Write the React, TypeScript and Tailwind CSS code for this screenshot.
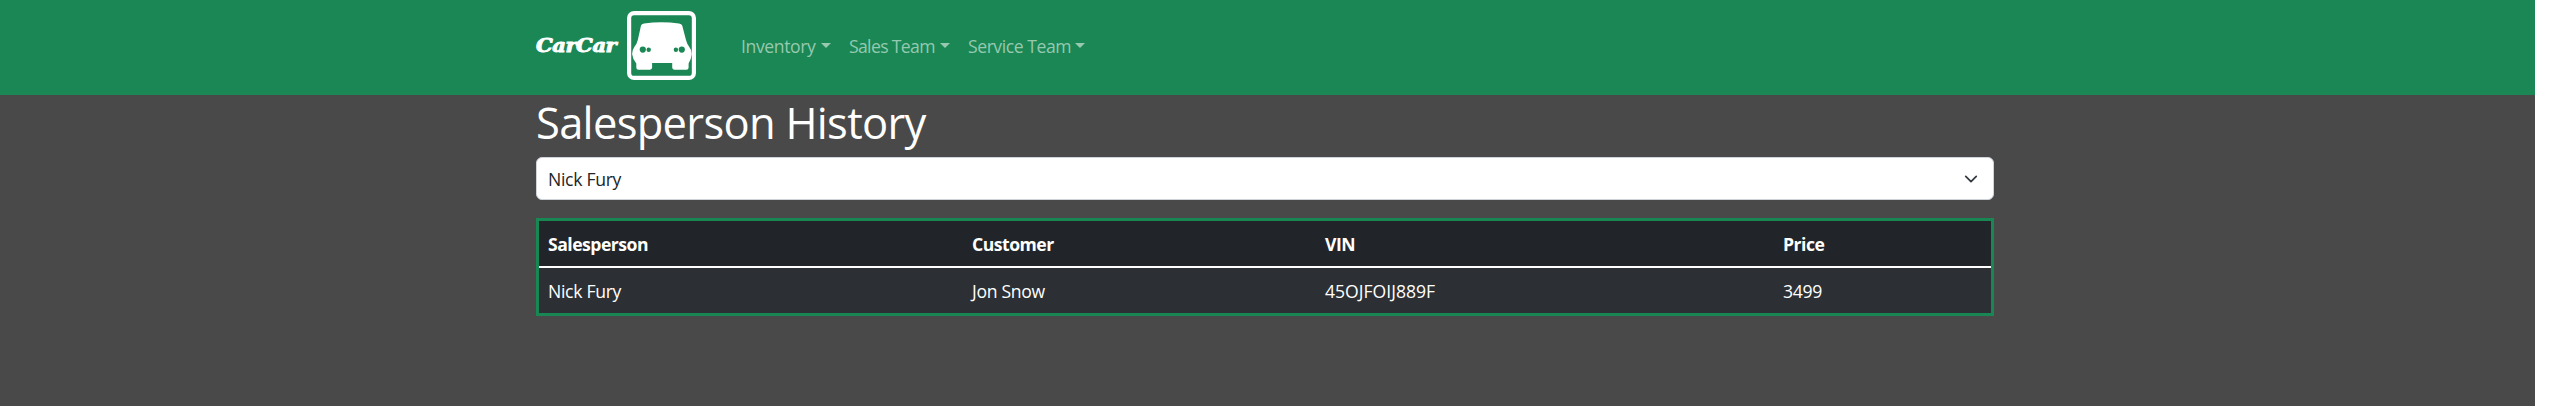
const menus = [
  { label: "Inventory", cls: "w-[75px] tracking-[-0.4px]" },
  { label: "Sales Team", cls: "w-[86px] tracking-[-0.65px]" },
  { label: "Service Team", cls: "w-[102px] tracking-[-0.45px]" },
];

function CarIcon() {
  return (
    <svg width="69" height="69" viewBox="0 0 69 69" className="block">
      <rect x="2.1" y="2.1" width="64.8" height="64.8" rx="5" fill="none" stroke="#fff" strokeWidth="4.2" />
      <path
        fill="#fff"
        d="M14 14.600Q14.500 13 17 12.600Q34.500 10 52 12.600Q54.700 13 55.200 14.600L59 29Q60 33 62 35.500Q64.800 39 64.800 43Q64.300 48 61.600 52.500V56.500Q61.600 58.700 59.400 58.700H47.300Q45.200 58.700 45.200 56.600V52H25.100V56.600Q25.100 58.700 23 58.700H11.500Q9.300 58.700 9.300 56.500V52.500Q5.600 48 5.100 43Q5.100 39 7.600 35.500Q9.800 33 10.800 29Z"
      />
      <g fill="#1a8754">
        <circle cx="15.800" cy="38.600" r="3.100" />
        <circle cx="21.700" cy="38.700" r="2.200" />
        <circle cx="48.900" cy="38.700" r="2.200" />
        <circle cx="54.800" cy="38.600" r="3.100" />
      </g>
    </svg>
  );
}

export default function App() {
  return (
    <div className="h-[408px] w-full overflow-hidden bg-white font-['Open_Sans','Noto_Sans',sans-serif] text-[17.6px] leading-[26px]">
      <div className="flex h-[406px] w-[2535px] flex-col bg-[#494949]">
        <nav className="flex h-[95px] items-center bg-[#1a8754] pb-[4px] pl-[536px]">
          <a className="flex items-center">
            <span className="w-[91px] whitespace-nowrap font-['DejaVu_Serif'] text-[18px] font-bold italic text-white">
              <span className="inline-block origin-left scale-x-[1.17] tracking-[-0.4px] [-webkit-text-stroke:0.9px_white]">
                CarCar
              </span>
            </span>
            <CarIcon />
          </a>
          <div className="ml-[45px] flex gap-[18px] text-[#96c9b0]">
            {menus.map((m) => (
              <a key={m.label} className="flex items-center">
                <span className={`${m.cls} whitespace-nowrap`}>{m.label}</span>
                <span className="ml-[5px] border-x-[5px] border-t-[5px] border-x-transparent" />
              </a>
            ))}
          </div>
        </nav>
        <main className="ml-[536px] w-[1458px]">
          <h1 className="h-[62px] whitespace-nowrap pt-px text-[43.5px] leading-[53px] tracking-[-0.7px] text-white">
            Salesperson History
          </h1>
          <div className="flex h-[43px] items-center justify-between rounded-[6px] border border-[#ced4da] bg-white pl-[11px] pr-[15px] text-[#212529]">
            <span className="pt-px tracking-[-0.3px]">Nick Fury</span>
            <svg width="14" height="14" viewBox="0 0 16 16" fill="none" stroke="#343a40" strokeWidth="2" strokeLinecap="round" strokeLinejoin="round">
              <path d="m2 5 6 6 6-6" />
            </svg>
          </div>
          <div className="mt-[18px] border-[3px] border-[#198754] text-white">
            <div className="grid h-[47px] grid-cols-[424px_353px_458px_1fr] items-center border-b-2 border-white bg-[#212529] font-bold tracking-[-0.5px] [&>span]:pl-[9px]">
              <span>Salesperson</span>
              <span>Customer</span>
              <span>VIN</span>
              <span>Price</span>
            </div>
            <div className="grid h-[45px] grid-cols-[424px_353px_458px_1fr] items-center bg-[#2c3034] pt-px tracking-[-0.3px] [&>span]:pl-[9px]">
              <span>Nick Fury</span>
              <span>Jon Snow</span>
              <span className="tracking-normal">45OJFOIJ889F</span>
              <span>3499</span>
            </div>
          </div>
        </main>
      </div>
    </div>
  );
}
